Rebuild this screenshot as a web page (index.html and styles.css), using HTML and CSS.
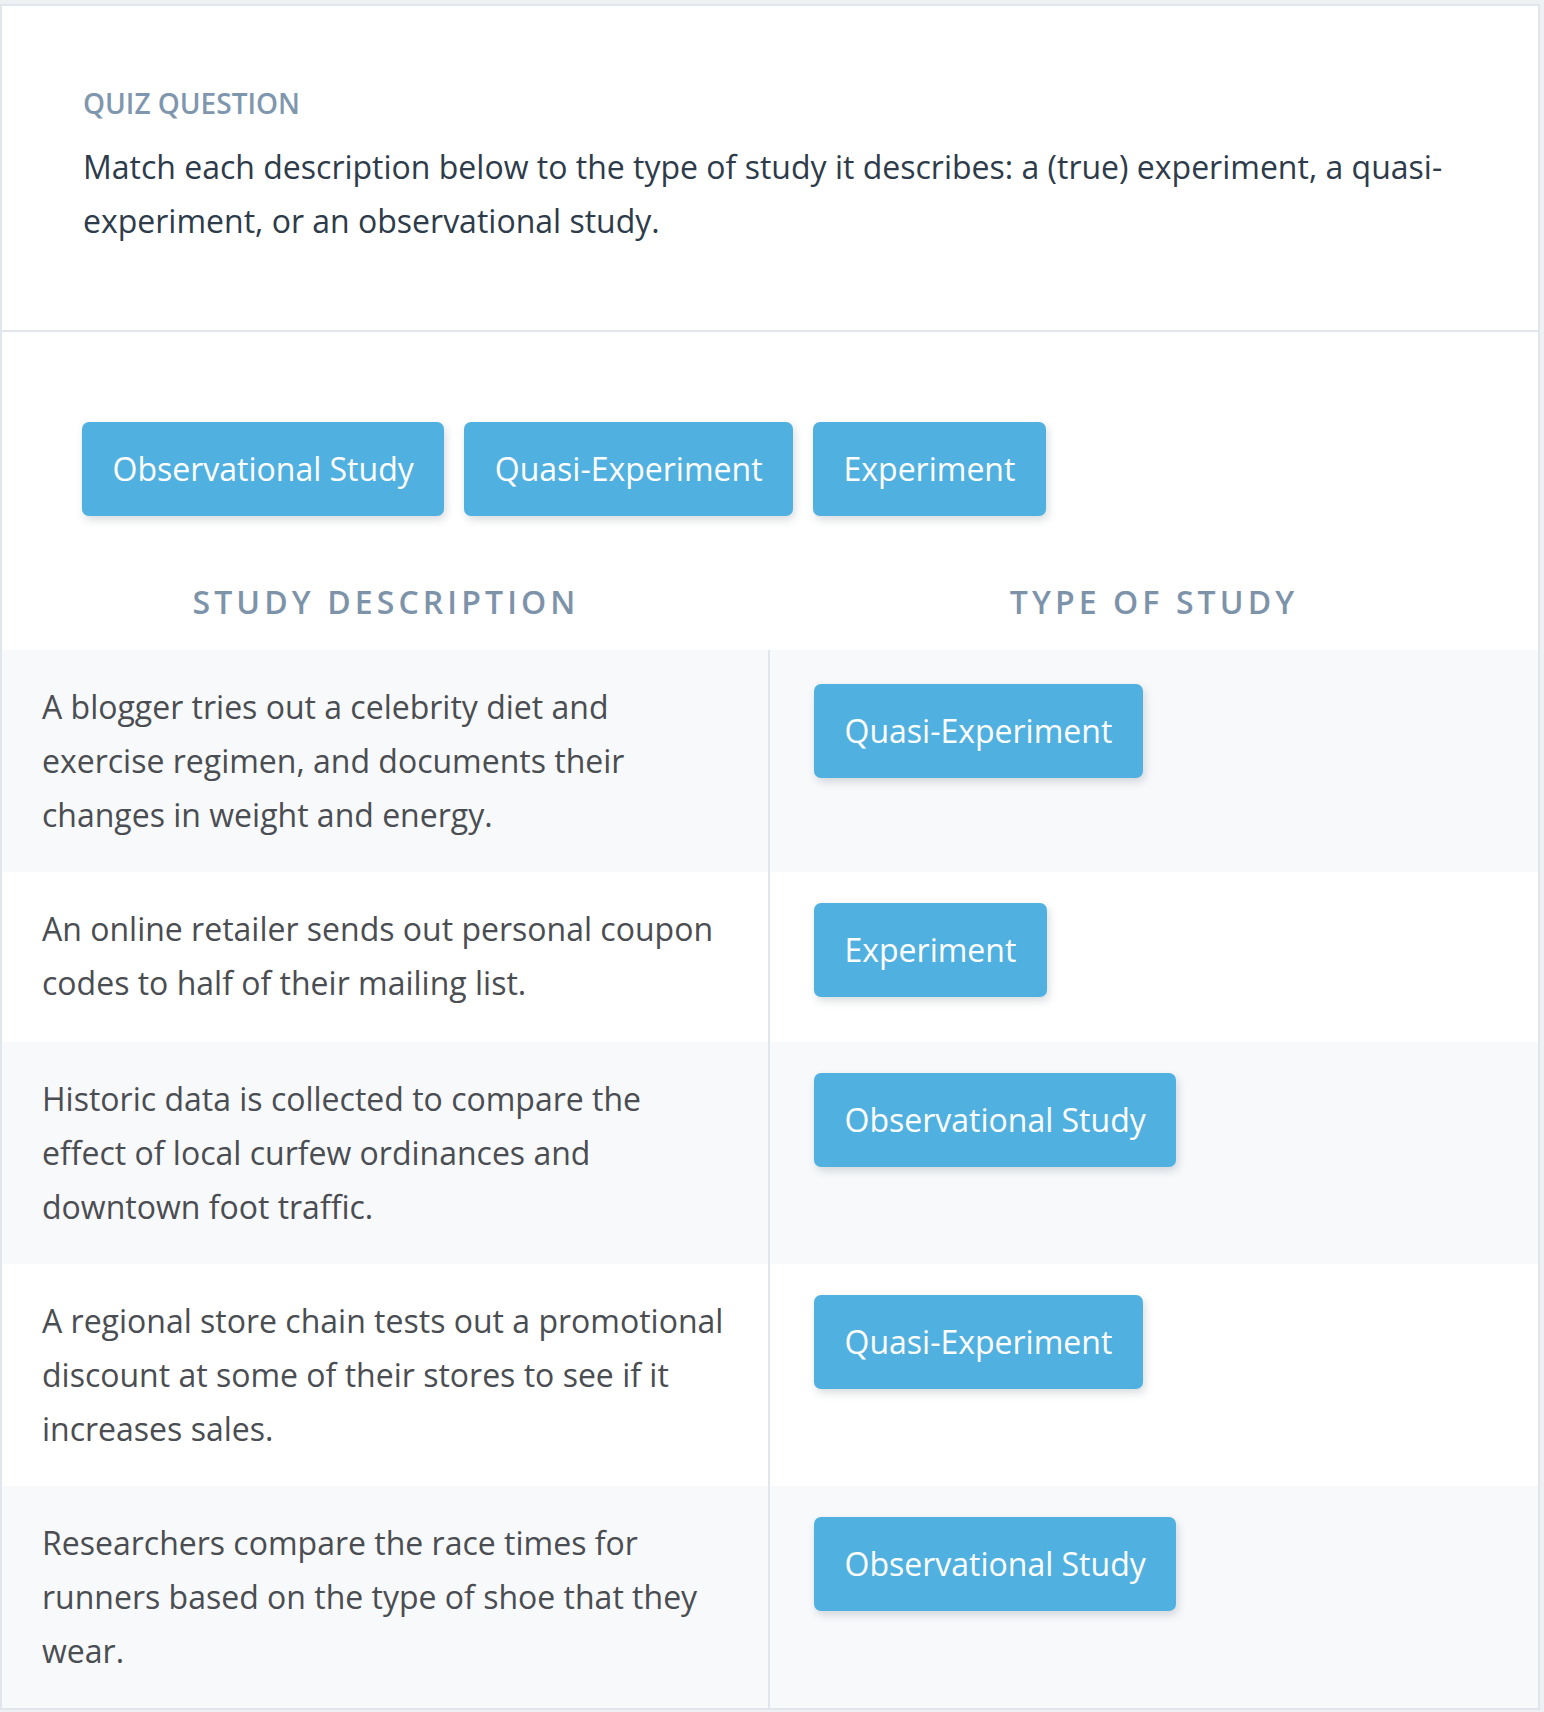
FILE: index.html
```html
<!DOCTYPE html>
<html lang="en">
<head>
<meta charset="utf-8">
<title>Quiz Question</title>
<link rel="stylesheet" href="styles.css">
</head>
<body>
<div class="card">
  <div class="question">
    <div class="label">QUIZ QUESTION</div>
    <p class="prompt">Match each description below to the type of study it describes: a (true) experiment, a quasi-experiment, or an observational study.</p>
  </div>
  <div class="matcher">
    <div class="bank">
      <span class="chip">Observational Study</span>
      <span class="chip">Quasi-Experiment</span>
      <span class="chip">Experiment</span>
    </div>
    <div class="heads">
      <div class="head">STUDY DESCRIPTION</div>
      <div class="head">TYPE OF STUDY</div>
    </div>
    <div class="table">
      <div class="row shade">
        <div class="desc">A blogger tries out a celebrity diet and exercise regimen, and documents their changes in weight and energy.</div>
        <div class="slot"><span class="chip">Quasi-Experiment</span></div>
      </div>
      <div class="row">
        <div class="desc">An online retailer sends out personal coupon codes to half of their mailing list.</div>
        <div class="slot"><span class="chip">Experiment</span></div>
      </div>
      <div class="row shade">
        <div class="desc">Historic data is collected to compare the effect of local curfew ordinances and downtown foot traffic.</div>
        <div class="slot"><span class="chip">Observational Study</span></div>
      </div>
      <div class="row">
        <div class="desc">A regional store chain tests out a promotional discount at some of their stores to see if it increases sales.</div>
        <div class="slot"><span class="chip">Quasi-Experiment</span></div>
      </div>
      <div class="row shade">
        <div class="desc">Researchers compare the race times for runners based on the type of shoe that they wear.</div>
        <div class="slot"><span class="chip">Observational Study</span></div>
      </div>
    </div>
  </div>
</div>
</body>
</html>
```
FILE: styles.css
```css
* { box-sizing: border-box; }
html, body { margin: 0; padding: 0; }
body {
  background: #eef0f3;
  padding-top: 4px;
  font-family: "Open Sans", "Liberation Sans", sans-serif;
  height: 1712px;
  overflow: hidden;
}
.card {
  width: 1540px;
  background: #ffffff;
  border: 2px solid #e1e6ed;
}
.question {
  padding: 77px 81px 82px 81px;
  border-bottom: 2px solid #e1e6ed;
}
.label {
  font-size: 28px;
  font-weight: 600;
  line-height: 40px;
  color: #7f97ae;
  margin-bottom: 17px;
}
.prompt {
  margin: 0;
  font-size: 32px;
  line-height: 54px;
  color: #2d3b4a;
}
.matcher {
  padding-top: 90px;
}
.bank {
  display: flex;
  gap: 20px;
  padding-left: 80px;
}
.chip {
  display: inline-block;
  background: #50b1e0;
  color: #ffffff;
  font-size: 32px;
  line-height: 54px;
  padding: 20px 30.5px;
  border-radius: 7px;
  box-shadow: 2px 4px 8px rgba(40, 60, 80, 0.18);
  white-space: nowrap;
}
.heads {
  display: grid;
  grid-template-columns: 1fr 1fr;
  margin-top: 66px;
  margin-bottom: 28px;
}
.head {
  text-align: center;
  font-size: 32px;
  font-weight: 600;
  line-height: 40px;
  letter-spacing: 4.1px;
  color: #7d93a9;
}
.row {
  display: grid;
  grid-template-columns: 1fr 1fr;
  background: #ffffff;
}
.row.shade {
  background: #f8f9fb;
}
.desc {
  padding: 30px 40px;
  font-size: 32px;
  line-height: 54px;
  color: #4a4d52;
  border-right: 2px solid #e1e6ed;
}
.slot {
  padding: 31px 0 45px 44px;
  display: flex;
  align-items: flex-start;
}
.row:first-child .slot {
  padding-top: 34px;
}
```
